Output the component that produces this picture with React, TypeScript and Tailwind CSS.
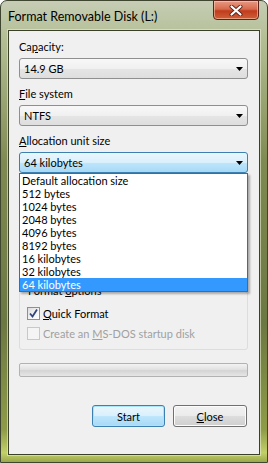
import React from 'react'

const ITEMS = [
  'Default allocation size',
  '512 bytes',
  '1024 bytes',
  '2048 bytes',
  '4096 bytes',
  '8192 bytes',
  '16 kilobytes',
  '32 kilobytes',
  '64 kilobytes',
]

function Arrow() {
  return (
    <svg width="7" height="4" viewBox="0 0 7 4">
      <polygon points="0,0 7,0 3.5,4" fill="#000" />
    </svg>
  )
}

function Combo({ value, active, children }: { value: string; active?: boolean; children?: React.ReactNode }) {
  return (
    <div className="relative">
      <div
        className={`h-[21px] w-[229px] flex items-center justify-between rounded-[3px] border pl-[4px] pr-[4px] ${
          active
            ? 'border-[#3c7fb1] bg-[linear-gradient(to_bottom,#eaf6fd_0%,#d9f0fc_50%,#bee6fd_51%,#a7d9f5_100%)]'
            : 'border-[#8e8f8f] bg-[linear-gradient(to_bottom,#f8f8f8_0%,#f0f0f0_50%,#e5e5e5_51%,#dedede_100%)]'
        }`}
      >
        <span className="leading-[15px]">{value}</span>
        <Arrow />
      </div>
      {children}
    </div>
  )
}

function Checkbox({ checked, disabled }: { checked?: boolean; disabled?: boolean }) {
  return (
    <div
      className={`w-[13px] h-[13px] border flex items-center justify-center ${
        disabled
          ? 'border-[#c8c8c8] bg-[#f4f4f4]'
          : 'border-[#8e8f8f] bg-[linear-gradient(135deg,#dcdcdc_0%,#f6f6f6_60%,#ffffff_100%)]'
      }`}
    >
      {checked && (
        <svg width="11" height="11" viewBox="0 0 11 11">
          <path d="M2 5.5 L4.5 8.5 L9 1.5" fill="none" stroke="#30457d" strokeWidth="1.8" />
        </svg>
      )}
    </div>
  )
}

export default function App() {
  return (
    <div className="w-[268px] h-[463px] overflow-hidden bg-white">
      <div className="relative w-[268px] h-[463px] rounded-t-[7px] border border-[#3e4630] bg-[linear-gradient(to_bottom,#c6cdb5_0%,#b4bf95_8%,#7f8a52_35%,#6c7842_70%,#8e9c48_93%,#c2d06a_98%,#9aa84c_100%)] font-['Lato',sans-serif] text-[11px] text-black">
        {/* Title bar */}
        <div className="h-[29px] flex items-start">
          <span className="pl-[7px] pt-[8px] text-[12.5px] leading-[15px]">Format Removable Disk (L:)</span>
        </div>
        <div className="absolute top-[-1px] right-[8px] w-[46px] h-[20px] rounded-b-[4px] border border-[#5a241a] bg-[linear-gradient(to_bottom,#e69a84_0%,#d86a4e_45%,#c03c1c_55%,#d0603a_100%)] flex items-center justify-center shadow-[inset_0_0_0_1px_rgba(255,220,200,0.5)]">
          <svg width="14" height="11" viewBox="0 0 14 11">
            <path d="M2.5 1.5 L11.5 9.5 M11.5 1.5 L2.5 9.5" stroke="#5a241a" strokeWidth="4" strokeLinecap="round" />
            <path d="M2.5 1.5 L11.5 9.5 M11.5 1.5 L2.5 9.5" stroke="#ffffff" strokeWidth="2.2" strokeLinecap="round" />
          </svg>
        </div>

        {/* Client area */}
        <div className="mx-[7px] h-[425px] border border-[#3a4128] shadow-[0_0_0_1px_rgba(230,236,210,0.6)] bg-[#f0f0f0] pl-[10px] pt-[8px]">
          <div className="h-[15px] leading-[15px]">
            Ca<span className="underline">p</span>acity:
          </div>
          <div className="mt-[4px]">
            <Combo value="14.9 GB" />
          </div>

          <div className="mt-[7px] h-[15px] leading-[15px]">
            <span className="underline">F</span>ile system
          </div>
          <div className="mt-[4px]">
            <Combo value="NTFS" />
          </div>

          <div className="mt-[7px] h-[15px] leading-[15px]">
            <span className="underline">A</span>llocation unit size
          </div>
          <div className="mt-[4px] relative z-10">
            <Combo value="64 kilobytes" active>
              <div className="absolute left-0 top-full w-[229px] h-[119px] border border-[#646464] bg-white shadow-[2px_2px_2px_rgba(0,0,0,0.3)]">
                {ITEMS.map((it, i) => (
                  <div
                    key={it}
                    className={`h-[13px] leading-[13px] pl-[2px] ${i === ITEMS.length - 1 ? 'bg-[#3399ff] text-white' : ''}`}
                  >
                    {it}
                  </div>
                ))}
              </div>
            </Combo>
          </div>

          {/* Format options */}
          <div className="relative mt-[118px] w-[229px] h-[59px] rounded-[3px] border border-[#d5dfe5] pl-[7px] pt-[14px]">
            <span className="absolute left-[6px] top-[-9px] bg-[#f0f0f0] px-[2px] leading-[15px]">
              Format <span className="underline">o</span>ptions
            </span>
            <div className="flex items-center gap-[3px] h-[15px]">
              <Checkbox checked />
              <span className="leading-[15px]">
                <span className="underline">Q</span>uick Format
              </span>
            </div>
            <div className="mt-[5px] flex items-center gap-[3px] h-[15px] text-[#a0a0a0]">
              <Checkbox disabled />
              <span className="leading-[15px]">
                Create an <span className="underline">M</span>S-DOS startup disk
              </span>
            </div>
          </div>

          {/* Progress */}
          <div className="mt-[13px] w-[229px] h-[14px] rounded-[2px] border border-[#b2b2b2] bg-[linear-gradient(to_bottom,#f3f3f3_0%,#e2e2e2_45%,#d4d4d4_55%,#e6e6e6_100%)]" />

          {/* Buttons */}
          <div className="mt-[28px] w-[229px] flex justify-end gap-[8px] pr-[1px]">
            <button className="w-[73px] h-[22px] rounded-[3px] border border-[#3c7fb1] bg-[linear-gradient(to_bottom,#eaf6fd_0%,#d9f0fc_50%,#bee6fd_51%,#a7d9f5_100%)] shadow-[inset_0_0_0_1px_#a8e4fb] leading-[15px]">
              Start
            </button>
            <button className="w-[74px] h-[22px] rounded-[3px] border border-[#707070] bg-[linear-gradient(to_bottom,#f2f2f2_0%,#ebebeb_50%,#dddddd_51%,#cfcfcf_100%)] shadow-[inset_0_0_0_1px_#fcfcfc] leading-[15px]">
              <span className="underline">C</span>lose
            </button>
          </div>
        </div>
      </div>
    </div>
  )
}
